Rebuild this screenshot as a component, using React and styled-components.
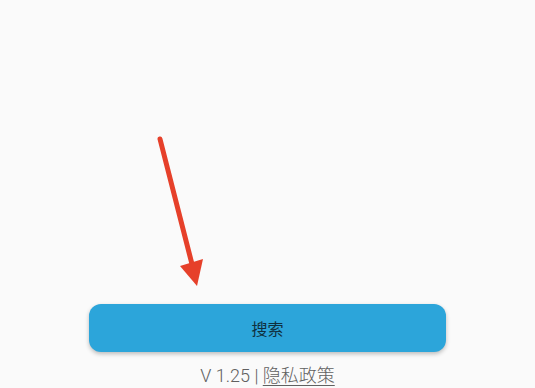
import React from 'react';
import styled, {createGlobalStyle} from 'styled-components';

const Global = createGlobalStyle`
    html, body {
        margin: 0;
        padding: 0;
        background: #fafafa;
        font-family: Roboto, "Noto Sans CJK SC", sans-serif;
    }
`;

const Page = styled.div`
    position: relative;
    height: 100vh;
    display: flex;
    flex-direction: column;
    align-items: center;
    justify-content: flex-end;
    overflow: hidden;
`;

const SearchButton = styled.button`
    width: 357px;
    height: 48px;
    border: none;
    border-radius: 12px;
    background: #2ca5da;
    color: #10303f;
    font-family: Roboto, "Noto Sans CJK SC", sans-serif;
    font-size: 16px;
    box-shadow: 0 2px 4px rgba(0, 0, 0, 0.25);
    cursor: pointer;
`;

const Footer = styled.div`
    margin-top: 12px;
    height: 24px;
    line-height: 24px;
    font-size: 18px;
    font-weight: 300;
    color: #606060;
`;

const Link = styled.span`
    text-decoration: underline;
    text-underline-offset: 3px;
    cursor: pointer;
`;

const Arrow = styled.svg`
    position: absolute;
    left: 0;
    top: 0;
`;

const App = () => {
    return <>
        <Global />
        <Page>
            <Arrow width="535" height="388" viewBox="0 0 535 388">
                <line x1="160" y1="139" x2="194" y2="272" stroke="#e6402a" strokeWidth="5" strokeLinecap="round" />
                <polygon points="180,266 197,286 203,259" fill="#e6402a" />
            </Arrow>
            <SearchButton>搜索</SearchButton>
            <Footer>V 1.25 | <Link>隐私政策</Link></Footer>
        </Page>
    </>
}

export default App;
